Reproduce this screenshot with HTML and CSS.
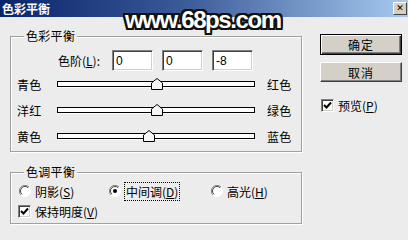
FILE: index.html
```html
<!DOCTYPE html>
<html lang="zh-CN">
  <head>
    <meta charset="UTF-8" />
    <title>色彩平衡</title>
    <link rel="stylesheet" href="styles.css">
  </head>
  <body>
    <div class="titlebar">
      <span class="title">色彩平衡</span>
      <span class="close">&#x2715;</span>
    </div>
    <div class="watermark">www.68ps.com</div>

    <div class="main">
      <div class="left">
        <div class="group balance">
          <span class="legend">色彩平衡</span>
          <div class="levels">
            <label class="levels-label">色阶(<u>L</u>):</label>
            <input class="num" type="text" value="0" />
            <input class="num" type="text" value="0" />
            <input class="num" type="text" value="-8" />
          </div>

          <div class="slider-row">
            <span class="side">青色</span>
            <div class="slider">
              <div class="track"></div>
              <svg class="thumb" style="left:94px" width="12" height="12" viewBox="0 0 12 12"><polygon points="0.5,11.5 0.5,5 6,0.5 11.5,5 11.5,11.5" fill="#f6f6f6" stroke="#000"/></svg>
            </div>
            <span class="side right">红色</span>
          </div>
          <div class="slider-row">
            <span class="side">洋红</span>
            <div class="slider">
              <div class="track"></div>
              <svg class="thumb" style="left:94px" width="12" height="12" viewBox="0 0 12 12"><polygon points="0.5,11.5 0.5,5 6,0.5 11.5,5 11.5,11.5" fill="#f6f6f6" stroke="#000"/></svg>
            </div>
            <span class="side right">绿色</span>
          </div>
          <div class="slider-row">
            <span class="side">黄色</span>
            <div class="slider">
              <div class="track"></div>
              <svg class="thumb" style="left:86px" width="12" height="12" viewBox="0 0 12 12"><polygon points="0.5,11.5 0.5,5 6,0.5 11.5,5 11.5,11.5" fill="#f6f6f6" stroke="#000"/></svg>
            </div>
            <span class="side right">蓝色</span>
          </div>
        </div>

        <div class="group tone">
          <span class="legend">色调平衡</span>
          <div class="radio-row">
            <label class="radio-item first">
              <svg class="radio" width="12" height="12" viewBox="0 0 12 12"><circle cx="6" cy="6" r="5.5" fill="#fff" stroke="#fff"/><path d="M10 2 A5.5 5.5 0 0 0 2 10" fill="none" stroke="#808080"/><path d="M9.2 2.8 A4.5 4.5 0 0 0 2.8 9.2" fill="none" stroke="#404040"/></svg>
              <span>阴影(<u>S</u>)</span>
            </label>
            <label class="radio-item second">
              <svg class="radio" width="12" height="12" viewBox="0 0 12 12"><circle cx="6" cy="6" r="5.5" fill="#fff" stroke="#fff"/><path d="M10 2 A5.5 5.5 0 0 0 2 10" fill="none" stroke="#808080"/><path d="M9.2 2.8 A4.5 4.5 0 0 0 2.8 9.2" fill="none" stroke="#404040"/><circle cx="6" cy="6" r="2" fill="#000"/></svg>
              <span class="focus">中间调(<u>D</u>)</span>
            </label>
            <label class="radio-item">
              <svg class="radio" width="12" height="12" viewBox="0 0 12 12"><circle cx="6" cy="6" r="5.5" fill="#fff" stroke="#fff"/><path d="M10 2 A5.5 5.5 0 0 0 2 10" fill="none" stroke="#808080"/><path d="M9.2 2.8 A4.5 4.5 0 0 0 2.8 9.2" fill="none" stroke="#404040"/></svg>
              <span>高光(<u>H</u>)</span>
            </label>
          </div>
          <label class="check-row">
            <span class="checkbox"><svg width="9" height="9" viewBox="0 0 9 9"><polyline points="1,4 3.5,6.5 8,1.5" fill="none" stroke="#000" stroke-width="2"/></svg></span>
            <span>保持明度(<u>V</u>)</span>
          </label>
        </div>
      </div>

      <div class="right">
        <button class="btn default" type="button">确定</button>
        <button class="btn" type="button">取消</button>
        <label class="check-row preview">
          <span class="checkbox"><svg width="9" height="9" viewBox="0 0 9 9"><polyline points="1,4 3.5,6.5 8,1.5" fill="none" stroke="#000" stroke-width="2"/></svg></span>
          <span>预览(<u>P</u>)</span>
        </label>
      </div>
    </div>
  </body>
</html>
```

FILE: styles.css
```css
body {
  margin: 0;
  background-color: #ececec;
  font-family: "Noto Sans CJK SC", "Liberation Sans", sans-serif;
  font-size: 12px;
  color: #000;
  position: relative;
  height: 240px;
  overflow: hidden;
}

.titlebar {
  height: 17px;
  display: flex;
  justify-content: space-between;
  align-items: center;
  background: linear-gradient(to right, #0a246a, #3a5a98 45%, #a6caf0);
}

.title {
  color: #fff;
  font-weight: bold;
  font-size: 12px;
  padding-left: 2px;
  line-height: 17px;
}

.close {
  width: 14px;
  height: 13px;
  margin-right: 1px;
  background-color: #d4d0c8;
  border: 1px solid;
  border-color: #fff #404040 #404040 #fff;
  box-sizing: border-box;
  font-family: "DejaVu Sans", sans-serif;
  font-size: 9px;
  font-weight: bold;
  line-height: 11px;
  text-align: center;
}

.watermark {
  position: absolute;
  left: 125px;
  top: 6px;
  font-family: "Liberation Sans", sans-serif;
  font-weight: bold;
  font-size: 24px;
  letter-spacing: -1.4px;
  color: #fff;
  text-shadow: -2px 0 #111, 2px 0 #111, 0 -2px #111, 0 2px #111,
    -1px -1px #111, 1px 1px #111, -1px 1px #111, 1px -1px #111,
    2px 2px #111, -2px -2px #111, 2px -2px #111, -2px 2px #111;
}

.main {
  display: flex;
  padding: 17px 0 0 10px;
}

.left {
  display: flex;
  flex-direction: column;
  gap: 20px;
  margin-top: 2px;
}

.group {
  position: relative;
  width: 292px;
  box-sizing: border-box;
  border: 1px solid #a0a0a0;
  box-shadow: 1px 1px 0 #fff, inset 1px 1px 0 #fff;
}

.legend {
  position: absolute;
  top: -9px;
  left: 13px;
  padding: 0 2px;
  line-height: 16px;
  background-color: #ececec;
  letter-spacing: 0.3px;
}

.balance {
  padding: 13px 0 2px 0;
}

.levels {
  display: flex;
  align-items: center;
  padding-left: 47px;
  height: 21px;
}

.levels-label {
  width: 54px;
}

.num {
  width: 41px;
  height: 21px;
  box-sizing: border-box;
  margin: 0 9px 0 0;
  padding: 0 0 0 3px;
  background-color: #fff;
  border: 1px solid;
  border-color: #808080 #fff #fff #808080;
  box-shadow: inset 1px 1px 0 #404040, inset -1px -1px 0 #d4d0c8;
  font-family: "Liberation Sans", sans-serif;
  font-size: 12px;
  outline: none;
}

.slider-row {
  display: flex;
  align-items: center;
  height: 26px;
  padding-left: 6px;
}

.slider-row:first-of-type {
  margin-top: 5px;
}

.side {
  width: 40px;
  letter-spacing: 0.3px;
}

.side.right {
  width: auto;
  margin-left: 12px;
}

.slider {
  position: relative;
  width: 198px;
  height: 12px;
}

.track {
  position: absolute;
  left: 0;
  right: 0;
  top: 3px;
  height: 6px;
  box-sizing: border-box;
  background-color: #fff;
  border: 1px solid #000;
  box-shadow: 0 1px 0 #fff;
}

.thumb {
  position: absolute;
  top: 0;
}

.tone {
  padding: 8px 0 2px 0;
}

.radio-row {
  display: flex;
  align-items: center;
  height: 20px;
  padding-left: 8px;
}

.radio-item {
  display: flex;
  align-items: center;
  gap: 4px;
}

.radio-item.first {
  width: 90px;
}

.radio-item.second {
  width: 102px;
}

.focus {
  outline: 1px dotted #000;
  padding: 0 1px;
}

.check-row {
  display: flex;
  align-items: center;
  gap: 4px;
  height: 20px;
  padding-left: 7px;
}

.checkbox {
  width: 13px;
  height: 13px;
  box-sizing: border-box;
  display: flex;
  align-items: center;
  justify-content: center;
  background-color: #fff;
  border: 1px solid;
  border-color: #808080 #fff #fff #808080;
  box-shadow: inset 1px 1px 0 #404040, inset -1px -1px 0 #d4d0c8;
}

.right {
  display: flex;
  flex-direction: column;
  margin-left: 18px;
  width: 82px;
}

.btn {
  width: 82px;
  height: 20px;
  margin: 0 0 7px 0;
  padding: 0;
  background-color: #d4d0c8;
  border: 1px solid;
  border-color: #fff #404040 #404040 #fff;
  box-shadow: inset -1px -1px 0 #808080;
  font-family: "Noto Sans CJK SC", sans-serif;
  font-size: 12px;
  letter-spacing: 1px;
}

.btn.default {
  height: 21px;
  border: 1px solid #000;
  box-shadow: inset 1px 1px 0 #fff, inset -1px -1px 0 #404040, inset -2px -2px 0 #808080;
}

.preview {
  margin-top: 6px;
  padding-left: 1px;
}
```
